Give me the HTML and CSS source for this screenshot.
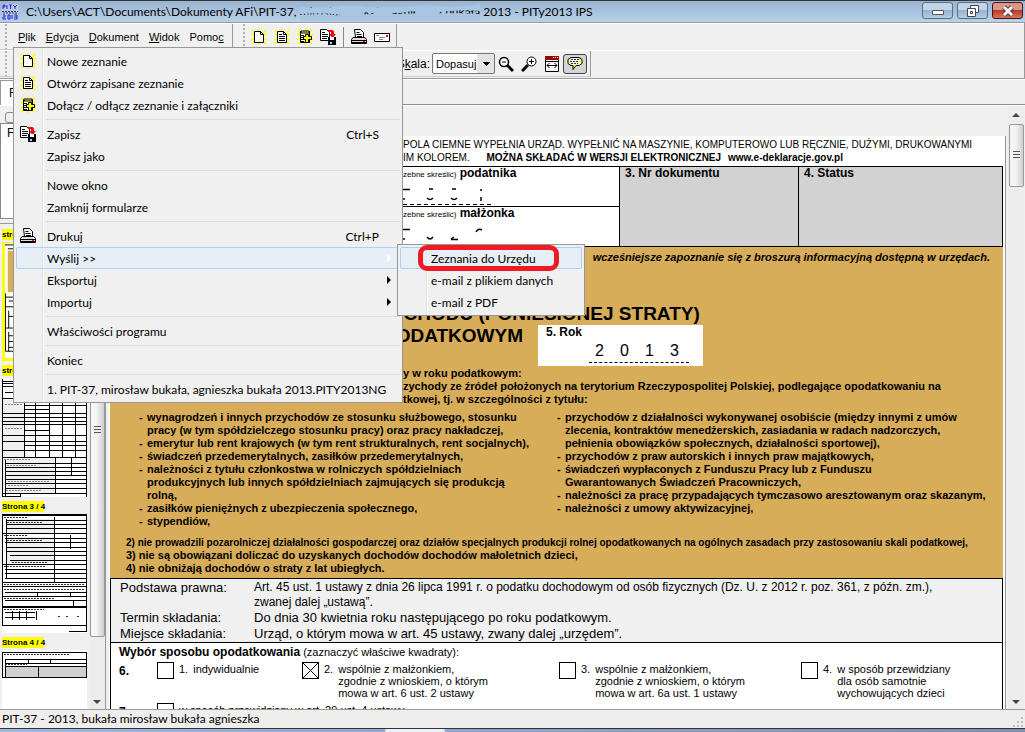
FILE: index.html
```html
<!DOCTYPE html>
<html lang="pl">
<head>
  <meta charset="UTF-8">
  <meta name="viewport" content="width=device-width, initial-scale=1.0">
  <title>PITy2013 IPS</title>
  <link rel="stylesheet" href="styles.css">
</head>
<body>

<!-- shared icons -->
<svg class="defs" aria-hidden="true">
  <symbol id="rays" viewBox="0 0 16 16">
    <path d="M1 1l14 14M15 1L1 15M8 0v16M0 5l16 6M0 11l16-6" stroke="#ff0" stroke-width="1.6"/>
  </symbol>
  <symbol id="new" viewBox="0 0 16 16">
    <use href="#rays"/>
    <path d="M3.5 2.5h6l3 3v8h-9z" fill="#fff" stroke="#000"/>
    <path d="M9.5 2.5v3h3" fill="none" stroke="#000"/>
  </symbol>
  <symbol id="open" viewBox="0 0 16 16">
    <use href="#rays"/>
    <path d="M3.5 2.5h6l3 3v8h-9z" fill="#fff" stroke="#000"/>
    <path d="M9.5 2.5v3h3M5 5.5h3M5 7.5h6M5 9.5h6M5 11.5h6" fill="none" stroke="#000"/>
  </symbol>
  <symbol id="attach" viewBox="0 0 16 16">
    <use href="#rays"/>
    <path d="M3.5 2.5h9v11h-9z" fill="#fff" stroke="#000"/>
    <path d="M4 2h8v2H4z" stroke="#000" fill="#ff0"/>
    <path d="M4 6.5h3M4 8.5h2M4 10.5h3M4 12.5h3" stroke="#000"/>
    <path d="M8.5 5.5h3v2h3v3h-3v3h-3v-3h-2v-3h2z" fill="#ff0" stroke="#000"/>
  </symbol>
  <symbol id="save" viewBox="0 0 16 16">
    <path d="M.5 .5h6l3 3v8h-9z" fill="#fff" stroke="#000"/>
    <path d="M2 3.5h3M2 5.5h6M2 7.5h6M2 9.5h5" stroke="#000"/>
    <path d="M8 1h4q2 0 2 2v2h2l-3.5 4L9 5h2V3H8z" fill="#f00"/>
    <path d="M8 8h8v8H8z"/>
    <path d="M10 8h4v3h-4z" fill="#fff"/>
    <path d="M10 13h2v2h-2z" fill="#ccc"/>
    <path d="M9 9v6" stroke="#00f" stroke-width=".6"/>
  </symbol>
  <symbol id="print" viewBox="0 0 16 16">
    <path d="M4.5 8.5l-1-8h6l3 3v5z" fill="#fff" stroke="#000"/>
    <path d="M5.5 3.5h3M5.5 5.5h5M6 7.5h5" stroke="#000"/>
    <path d="M2 8.5h12l1.5 2v4H.5v-4z" fill="#ddd" stroke="#000"/>
    <path d="M0 11.5h16M1 13.5h14" stroke="#000"/>
    <path d="M12 12.5h2" stroke="#f00"/>
  </symbol>
  <symbol id="mail" viewBox="0 0 16 16">
    <path d="M.5 4.5h15v8H.5z" fill="#fff" stroke="#000"/>
    <path d="M2 6.5h3M5 8.5h6M5 10.5h4" stroke="#888"/>
    <path d="M12 6h2v2h-2z" fill="#f00"/>
  </symbol>
  <symbol id="zoom-out" viewBox="0 0 16 16">
    <circle cx="6" cy="6" r="4.5" fill="#fff" stroke="#000" stroke-width="1.5"/>
    <path d="M4 6h4" stroke="#000"/>
    <path d="M9 9l6 6" stroke="#000" stroke-width="3"/>
  </symbol>
  <symbol id="zoom-in" viewBox="0 0 16 16">
    <circle cx="10.5" cy="5.5" r="4.5" fill="#fff" stroke="#000"/>
    <path d="M8 5.5h5M10.5 3v5" stroke="#000"/>
    <path d="M7 9l-6 6" stroke="#000" stroke-width="3"/>
  </symbol>
  <symbol id="fit" viewBox="0 0 16 16">
    <path d="M1.5 .5h13v15h-13z" fill="#fff" stroke="#000"/>
    <path d="M1 0h14v4H1z" fill="#900"/>
    <path d="M9 1.5h1M11 1.5h1M13 1.5h1" stroke="#fff"/>
    <path d="M3 9.5h10M5.5 7L3 9.5 5.5 12M10.5 7L13 9.5 10.5 12M1 5.5h14" fill="none" stroke="#000"/>
  </symbol>
  <symbol id="bubble" viewBox="0 0 16 16">
    <path d="M4 1.5h8l3 2v4l-3 2H9l-3 4v-4H4l-3-2v-4z" fill="#ff8" stroke="#000"/>
    <path d="M4 3.5h8M3 5.5h9M4 7.5h7" stroke="#22f" stroke-dasharray="2 1"/>
  </symbol>
</svg>

<header class="titlebar">
  <svg class="app-icon" viewBox="0 0 16 16" aria-hidden="true">
    <path d="M0 0h16v16H0z" fill="#b8c8f0"/>
    <path d="M1 5V1h2v2H1M5 1v4M7 1h3M8.5 1v4M11 1l2 2 2-2M13 3v2M1 11h2v2H1v2h3M6 11h2v4H6zM10 11v4M12 11h3v4h-3M12 13h3" fill="none" stroke="#22c"/>
    <path d="M0 7.5h16M1 9h14" stroke="#335" stroke-dasharray="2 1"/>
  </svg>
  <h1 class="title">C:\Users\ACT\Documents\Dokumenty AFi\PIT-37, <span class="smudged">mirosław bukała, agnieszka bukała<svg class="smudge" viewBox="0 0 182 18" preserveAspectRatio="none" aria-hidden="true"><path d="M0 4q20 2 46-1 50 3 80-1 30 4 56-1v7q-20-2-42 1-20-3-40 1-30-3-54 2-24-3-46-1zM0 12q24-2 44 1 30-3 60-2 30-2 78 0v7H0zM40 3h24v14H40zM74 6h18v9H74zM116 4h24v12h-24z" fill="#a8c5e2"/></svg></span> 2013 - PITy2013 IPS</h1>
  <div class="window-buttons">
    <button class="win" aria-label="Minimalizuj"><svg width="14" height="10" viewBox="0 0 14 10"><path d="M1.5 4.5h11v4h-11z" fill="#fff" stroke="#555"/></svg></button>
    <button class="win" aria-label="Przywróć"><svg width="14" height="12" viewBox="0 0 14 12"><path d="M4.5 .5h8v7h-8z" fill="#fff" stroke="#445"/><path d="M1.5 3.5h8v8h-8z" fill="#fff" stroke="#445"/><path d="M4.5 6.5h2v2h-2z" fill="none" stroke="#445"/></svg></button>
    <button class="win close" aria-label="Zamknij"><svg width="14" height="12" viewBox="0 0 14 12"><path d="M3 2l8 8M11 2L3 10" stroke="#533" stroke-width="5"/><path d="M3 2l8 8M11 2l-8 8" stroke="#fff" stroke-width="3"/></svg></button>
  </div>
</header>

<div class="rebar">
  <div class="band-row">
    <nav class="band menubar">
      <button><u>P</u>lik</button>
      <button><u>E</u>dycja</button>
      <button><u>D</u>okument</button>
      <button><u>W</u>idok</button>
      <button>Pomo<u>c</u></button>
    </nav>
    <div class="band icons">
      <button aria-label="Nowe zeznanie"><svg class="icon"><use href="#new"/></svg></button>
      <button aria-label="Otwórz"><svg class="icon"><use href="#open"/></svg></button>
      <button aria-label="Dołącz"><svg class="icon"><use href="#attach"/></svg></button>
      <button aria-label="Zapisz"><svg class="icon"><use href="#save"/></svg></button>
      <span class="vsep"></span>
      <button aria-label="Drukuj"><svg class="icon"><use href="#print"/></svg></button>
      <button aria-label="Wyślij"><svg class="icon"><use href="#mail"/></svg></button>
    </div>
  </div>
  <div class="band-row">
    <div class="band zoombar">
      <label for="scale">S<u>k</u>ala:</label>
      <select id="scale"><option>Dopasuj</option></select>
      <button aria-label="Pomniejsz"><svg class="icon"><use href="#zoom-out"/></svg></button>
      <button aria-label="Powiększ"><svg class="icon"><use href="#zoom-in"/></svg></button>
      <button aria-label="Szerokość strony"><svg class="icon"><use href="#fit"/></svg></button>
      <button class="pressed" aria-label="Podpowiedzi"><svg class="icon"><use href="#bubble"/></svg></button>
    </div>
  </div>
</div>

<div class="tabstrip"><span class="tab">F</span></div>

<main class="workspace">
  <aside class="sidebar">
    <div class="side-tools"><button aria-label="Zwiń"></button></div>
    <div class="tree">F</div>
    <div class="pages">
      <div class="thumbs">
        <div class="thumb current">
          <span>strona 1 / 4</span>
          <svg viewBox="0 0 85 119" preserveAspectRatio="none">
            <path d="M0 0h85v119H0z" fill="#fff"/>
            <path d="M3 8h79v43H3z" fill="#d8ad5a"/>
            <path d="M0 2h85M3 6h80M0 56h85M4 60h80M0 66h85M4 70v18M4 76h80M0 88h85M4 92v20M4 96h80M4 102h80M4 108h80M.5 52v60h84" fill="none" stroke="#000"/>
          </svg>
        </div>
        <div class="thumb">
          <span>strona 2 / 4</span>
          <svg viewBox="0 0 85 119">
            <path d="M0 0h85v119H0z" fill="#fff"/>
            <path d="M1 22h22v57H1zM1 80h52v36H1z" fill="#f0f0f0"/>
            <path d="M.5 1v118M84.5 1v118M22.5 22v57M33.5 22v57M47.5 22v57M60.5 22v57M73.5 22v57M53.5 80v36M69.5 80v17M3.5 82v36M18.5 116v3" stroke="#000"/>
            <path d="M0 3.5h85M0 5.5h85M0 8.5h85M3 14.5h82M0 20.5h85M22 27.5h62M22 31.5h25M0 35.5h85M0 39.5h85M0 43.5h85M0 46.5h85M22 52.5h25M0 57.5h85M0 63.5h85M22 67.5h62M0 72.5h85M0 79.5h85M3 85.5h82M3 89.5h82M3 93.5h82M3 97.5h82M3 101.5h82M3 105.5h82M3 110.5h82M0 115.5h85M0 118.5h18" stroke="#000"/>
            <path d="M3 26.5h18M3 50.5h18M2 81.5h26M5 87.5h30M6 103.5h42M6 107.5h20M4 112.5h35" stroke="#888" stroke-dasharray="2 1"/>
          </svg>
        </div>
        <div class="thumb">
          <span>Strona 3 / 4</span>
          <svg viewBox="0 0 85 119">
            <path d="M0 0h85v119H0z" fill="#fff"/>
            <path d="M4 5h48v15H4zM4 23h48v26H4z" fill="#f0f0f0"/>
            <path d="M0 .5h85M0 1.5h85M4 6.5h80M4 10.5h80M4 14.5h80M0 19.5h85M3 24.5h82M3 28.5h82M4 33.5h80M4 37.5h80M8 41.5h76M8 46.5h76M0 50.5h85M3 55.5h82M3 59.5h82M3 64.5h82M0 68.5h85M0 72.5h85M3 78.5h82M0 82.5h85M3 86.5h82M0 92.5h85M0 93.5h85M3 98.5h30M3 103.5h30M0 111.5h85M67 117.5h18" stroke="#000"/>
            <path d="M.5 1v110M84.5 1v117M4.5 5v60M52.5 3v66M68.5 21v14M35.5 78v4M68.5 78v4M71.5 86v6M10.5 97v9M17.5 97v9M24.5 97v9M34.5 97v9" stroke="#000"/>
            <path d="M2 3.5h24M5 8.5h36M2 21.5h24M5 26.5h36M10 48.5h36M2 52.5h42M2 70.5h80M2 75.5h80M2 84.5h50M2 95.5h40M56 102.5h2M64 102.5h2M75 102.5h2" stroke="#333" stroke-dasharray="2 1"/>
          </svg>
        </div>
        <div class="thumb">
          <span>Strona 4 / 4</span>
          <svg viewBox="0 0 85 119">
            <path d="M0 0h85v119H0z" fill="#fff"/>
            <path d="M3 16h82v11H3z" fill="#d0d0d0"/>
            <path d="M0 2.5h85M3 9.5h82M3 13.5h82M3 16.5h82M0 27.5h85M.5 2v25M84.5 2v25M3.5 9v18M36.5 16v11M26.5 9v4M48.5 9v4" stroke="#000"/>
            <path d="M2 4.5h66M3 14.5h22" stroke="#333" stroke-dasharray="2 1"/>
          </svg>
        </div>
      </div>
      <div class="scroll side-scroll">
        <div class="scroll-thumb"></div>
        <i class="arrow down"></i>
      </div>
    </div>
  </aside>

  <section class="viewer">
    <article class="sheet">
      <p class="notice">POLA CIEMNE WYPEŁNIA URZĄD. WYPEŁNIĆ NA MASZYNIE, KOMPUTEROWO LUB RĘCZNIE, DUŻYMI, DRUKOWANYMI<br>
        IM KOLOREM. <b class="gap">MOŻNA SKŁADAĆ W WERSJI ELEKTRONICZNEJ</b> <b>www.e-deklaracje.gov.pl</b></p>

      <div class="ids">
        <div class="persons">
          <div class="person"><small>zebne skreślić)</small> <b>podatnika</b>
            <svg class="digits" width="90" height="20" viewBox="0 0 90 20" aria-hidden="true">
              <path d="M0 4.5h7M26 4h4M49 4h4M78 4v2M1 13v2M24 13q3 3 6 0M48 13q3 3 6 0M78 12v4" fill="none" stroke="#000" stroke-width="1.5"/>
              <path d="M0 19.5h88" stroke="#000" stroke-dasharray="4 3"/>
            </svg>
          </div>
          <div class="person"><small>zebne skreślić)</small> <b>małżonka</b>
            <svg class="digits" width="90" height="20" viewBox="0 0 90 20" aria-hidden="true">
              <path d="M0 4.5h7M73 7q2-4 6-2M1 13v2M24 12q3 4 6 0M48 14l3-2M48 14.5h7" fill="none" stroke="#000" stroke-width="1.5"/>
            </svg>
          </div>
        </div>
        <div class="grey"><b>3. Nr dokumentu</b></div>
        <div class="grey"><b>4. Status</b></div>
      </div>

      <div class="gold">
        <p class="advice">wcześniejsze zapoznanie się z broszurą informacyjną dostępną w urzędach.</p>
        <h2 class="heading">DOCHODU (PONIESIONEJ STRATY)</h2>
        <div class="year-row">
          <h2 class="heading">PODATKOWYM</h2>
          <div class="year"><b>5. Rok</b><div class="year-digits"><span>2</span><span>0</span><span>1</span><span>3</span></div></div>
        </div>
        <div class="intro">
          <p>y w roku podatkowym:</p>
          <p>zychody ze źródeł położonych na terytorium Rzeczypospolitej Polskiej, podlegające opodatkowaniu na</p>
          <p>tkowej, tj. w szczególności z tytułu:</p>
        </div>
        <div class="sources">
          <ul>
            <li>wynagrodzeń i innych przychodów ze stosunku służbowego, stosunku<br>pracy (w tym spółdzielczego stosunku pracy) oraz pracy nakładczej,</li>
            <li>emerytur lub rent krajowych (w tym rent strukturalnych, rent socjalnych),</li>
            <li>świadczeń przedemerytalnych, zasiłków przedemerytalnych,</li>
            <li>należności z tytułu członkostwa w rolniczych spółdzielniach<br>produkcyjnych lub innych spółdzielniach zajmujących się produkcją<br>rolną,</li>
            <li>zasiłków pieniężnych z ubezpieczenia społecznego,</li>
            <li>stypendiów,</li>
          </ul>
          <ul>
            <li>przychodów z działalności wykonywanej osobiście (między innymi z umów<br>zlecenia, kontraktów menedżerskich, zasiadania w radach nadzorczych,<br>pełnienia obowiązków społecznych, działalności sportowej),</li>
            <li>przychodów z praw autorskich i innych praw majątkowych,</li>
            <li>świadczeń wypłaconych z Funduszu Pracy lub z Funduszu<br>Gwarantowanych Świadczeń Pracowniczych,</li>
            <li>należności za pracę przypadających tymczasowo aresztowanym oraz skazanym,</li>
            <li>należności z umowy aktywizacyjnej,</li>
          </ul>
        </div>
        <div class="conditions">
          <p class="tight">2) nie prowadzili pozarolniczej działalności gospodarczej oraz działów specjalnych produkcji rolnej opodatkowanych na ogólnych zasadach przy zastosowaniu skali podatkowej,</p>
          <p>3) nie są obowiązani doliczać do uzyskanych dochodów dochodów małoletnich dzieci,</p>
          <p>4) nie obniżają dochodów o straty z lat ubiegłych.</p>
        </div>
      </div>

      <dl class="legal">
        <dt>Podstawa prawna:</dt>
        <dd class="act">Art. 45 ust. 1 ustawy z dnia 26 lipca 1991 r. o podatku dochodowym od osób fizycznych (Dz. U. z 2012 r. poz. 361, z późn. zm.),<br>zwanej dalej „ustawą”.</dd>
        <dt>Termin składania:</dt>
        <dd>Do dnia 30 kwietnia roku następującego po roku podatkowym.</dd>
        <dt>Miejsce składania:</dt>
        <dd>Urząd, o którym mowa w art. 45 ustawy, zwany dalej „urzędem”.</dd>
      </dl>

      <div class="choice">
        <p class="choice-title"><b>Wybór sposobu opodatkowania</b> (zaznaczyć właściwe kwadraty):</p>
        <div class="options">
          <b class="num">6.</b>
          <label><input type="checkbox"><span>1.</span><span>indywidualnie</span></label>
          <label><input type="checkbox" checked><span>2.</span><span>wspólnie z małżonkiem,<br>zgodnie z wnioskiem, o którym<br>mowa w art. 6 ust. 2 ustawy</span></label>
          <label><input type="checkbox"><span>3.</span><span>wspólnie z małżonkiem,<br>zgodnie z wnioskiem, o którym<br>mowa w art. 6a ust. 1 ustawy</span></label>
          <label><input type="checkbox"><span>4.</span><span>w sposób przewidziany<br>dla osób samotnie<br>wychowujących dzieci</span></label>
        </div>
        <div class="options">
          <b class="num">7.</b>
          <label class="wide"><input type="checkbox"><span>w sposób przewidziany w art. 29 ust. 4 ustawy</span></label>
        </div>
      </div>
    </article>
  </section>

  <div class="scroll main-scroll">
    <i class="arrow up"></i>
    <div class="scroll-thumb"></div>
    <i class="arrow down"></i>
  </div>
</main>

<footer class="statusbar"><span>PIT-37 - 2013, bukała mirosław bukała agnieszka</span>
  <svg width="10" height="10" viewBox="0 0 10 10" aria-hidden="true"><path d="M8 0h2v2H8zM4 4h2v2H4zM8 4h2v2H8zM0 8h2v2H0zM4 8h2v2H4zM8 8h2v2H8z" fill="#bbb"/></svg>
</footer>
<div class="taskbar"><i></i></div>

<ul class="menu file-menu">
  <li><button><svg class="icon"><use href="#new"/></svg>Nowe zeznanie</button></li>
  <li><button><svg class="icon"><use href="#open"/></svg>Otwórz zapisane zeznanie</button></li>
  <li><button><svg class="icon"><use href="#attach"/></svg>Dołącz / odłącz zeznanie i załączniki</button></li>
  <li class="sep"></li>
  <li><button><svg class="icon"><use href="#save"/></svg>Zapisz<kbd>Ctrl+S</kbd></button></li>
  <li><button>Zapisz jako</button></li>
  <li class="sep"></li>
  <li><button>Nowe okno</button></li>
  <li><button>Zamknij formularze</button></li>
  <li class="sep"></li>
  <li><button><svg class="icon"><use href="#print"/></svg>Drukuj<kbd>Ctrl+P</kbd></button></li>
  <li><button class="more hover">Wyślij &gt;&gt;</button></li>
  <li><button class="more">Eksportuj</button></li>
  <li><button class="more">Importuj</button></li>
  <li class="sep"></li>
  <li><button>Właściwości programu</button></li>
  <li class="sep"></li>
  <li><button>Koniec</button></li>
  <li class="sep"></li>
  <li><button>1. PIT-37, mirosław bukała, agnieszka bukała 2013.PITY2013NG</button></li>
</ul>

<ul class="menu sub-menu">
  <li><button class="hover">Zeznania do Urzędu</button></li>
  <li><button>e-mail z plikiem danych</button></li>
  <li><button>e-mail z PDF</button></li>
</ul>
<div class="marker"></div>

</body>
</html>
```

FILE: styles.css
```css
* { margin:0; padding:0; box-sizing:border-box; }

body { display:flex; flex-direction:column; height:100vh; overflow:hidden; background:#f0f0f0; color:#000; font:12px Lato, sans-serif; }
button { border:0; background:none; color:inherit; font:inherit; }
ul { list-style:none; }
.defs { position:absolute; width:0; height:0; }
.icon { display:block; width:16px; height:16px; flex:none; }

/* title bar */
.titlebar { display:flex; align-items:center; height:23px; padding:0 2px; border-top:1px solid #333; border-bottom:1px solid #999; background:linear-gradient(#99b4d1, #b9d1ea); }
.app-icon { width:16px; height:16px; margin-right:8px; }
.title { flex:1; font-size:12px; font-weight:normal; line-height:18px; white-space:pre; }
.smudged { position:relative; display:inline-block; }
.smudge { position:absolute; left:0; top:0; width:100%; height:18px; }
.window-buttons { display:flex; gap:4px; align-self:flex-start; padding-top:1px; }
.win { display:flex; align-items:center; justify-content:center; width:31px; height:17px; border:1px solid #56708c; border-radius:3px; background:linear-gradient(#c3d4e7 50%, #98b3d0 50%, #b5cce4); }
.close { border-color:#4d1118; background:linear-gradient(#d9978a 45%, #b83a25 50%, #d5765c); }

/* toolbars */
.rebar { height:56px; border-right:1px solid #999; border-bottom:1px solid #999; font:11px "Liberation Sans", sans-serif; }
.band-row { display:flex; gap:5px; height:27px; border-top:1px solid #fff; }
.band { display:flex; align-items:center; padding-left:16px; border-right:1px solid #999; border-bottom:1px solid #ccc; background:radial-gradient(circle, #b0b0b0 1px, transparent 1px) 4px 3px / 4px 4px repeat-y; }
.menubar { gap:10px; width:233px; padding-left:18px; }
.menubar button { flex:none; }
.icons { gap:7px; padding-left:13px; }
.icons button:last-child { margin-right:6px; }
.vsep { width:1px; height:20px; background:#888; }
.zoombar { gap:7px; width:591px; padding-right:3px; justify-content:flex-end; }
.zoombar label { margin-right:-5px; font-size:12px; }
#scale { width:63px; height:21px; margin-right:-4px; padding-left:3px; border:1px solid #777; border-radius:2px; appearance:none; color:#000; font:11px "Liberation Sans", sans-serif;
  background:linear-gradient(#000, #000) 50px 8px / 7px 1px no-repeat, linear-gradient(#000, #000) 51px 9px / 5px 1px no-repeat, linear-gradient(#000, #000) 52px 10px / 3px 1px no-repeat, linear-gradient(#000, #000) 53px 11px / 1px 1px no-repeat, linear-gradient(90deg, #fff 44px, #e4e4e4 44px); }
.pressed { padding:1px 3px; border:1px solid #444; border-radius:3px; background:#d4d4d4; }
.zoombar .pressed { margin-left:-4px; }

.tabstrip { height:26px; border-top:1px solid #fff; border-bottom:1px solid #888d96; }
.tab { display:block; width:60px; height:25px; padding:5px 8px; border:1px solid #999; border-bottom:0; background:#fff; font:12px/14px "Liberation Sans", sans-serif; }

/* sidebar */
.workspace { display:flex; flex:1; min-height:0; border-top:1px solid #fff; }
.sidebar { display:flex; flex-direction:column; width:106px; border-right:1px solid #999; }
.side-tools { height:17px; padding:4px 5px; }
.side-tools button { width:20px; height:11px; border:1px solid #888; border-radius:3px; }
.tree { height:96px; padding:2px 6px; border:1px solid #888; background:#fff; font:12px/14px "Liberation Sans", sans-serif; }
.pages { display:flex; flex:1; min-height:0; margin-top:4px; border-top:1px solid #999; }
.thumbs { width:87px; padding:5px 0 0 2px; overflow:hidden; }
.thumb { height:136px; }
.thumb span { display:block; width:42px; height:11px; margin-bottom:2px; background:#ff0; font:bold 8px/11px "Liberation Sans", sans-serif; white-space:nowrap; }
.thumb svg { display:block; width:85px; height:119px; }
.current svg { border:3px solid #ff0; border-top-width:1px; }

/* scrollbars */
.scroll { display:flex; flex-direction:column; align-items:center; width:16px; background:#ececec; }
.scroll-thumb { width:15px; border:1px solid #999; border-radius:2px;
  background:repeating-linear-gradient(#555 0 1px, #eee 1px 3px) center / 7px 9px no-repeat, linear-gradient(90deg, #f5f5f5 40%, #cfcfd2); }
.side-scroll { justify-content:space-between; margin-left:2px; padding-bottom:5px; }
.side-scroll .scroll-thumb { height:413px; }
.main-scroll { padding:7px 0 5px; margin-right:1px; }
.main-scroll .scroll-thumb { height:63px; margin-top:7px; }
.main-scroll .down { margin-top:auto; }
.arrow { border:4px solid transparent; }
.up { border-top:0; border-bottom-color:#444; }
.down { border-bottom:0; border-top-color:#444; }

/* form sheet */
.viewer { flex:1; min-width:0; padding:30px 2px 0 3px; overflow:hidden; }
.sheet { height:900px; padding:2px 2px 0 1px; border-right:1px solid #999; background:#fff; font:bold 11px/13px "Liberation Sans", sans-serif; white-space:nowrap; }
.notice { height:28px; padding-left:293px; font-size:10px; font-weight:normal; line-height:13px; }
.notice b { font-size:10px; margin-right:4px; }
.notice .gap { margin-left:14px; }
.ids { display:grid; grid-template-columns:509px 179px 1fr; height:81px; border:1px solid #000; border-left:0; font-size:12px; }
.persons { display:grid; grid-template-rows:1fr 1fr; }
.person { padding-left:293px; border-bottom:1px solid #000; }
.person:last-child { border-bottom:0; }
.person small { font-size:8px; font-weight:normal; }
.digits { display:block; height:20px; margin-top:4px; }
.grey { padding-left:5px; border-left:1px solid #000; background:#d2d2d2; }

.gold { height:331px; padding:4px 13px 0 16px; background:#d8ad5a; }
.advice { height:52px; font-style:italic; text-align:right; }
.heading { padding-left:249px; font-size:19px; line-height:22px; }
.year-row { display:flex; align-items:flex-start; height:41px; margin-bottom:1px; }
.year-row .heading { width:397px; padding:0; text-align:right; }
.year { width:165px; height:41px; margin-left:15px; padding-left:8px; background:#fff; font-size:12px; line-height:14px; }
.year-digits { display:flex; width:100px; margin-left:43px; border-bottom:1px dashed #000; font:16px/23px "Liberation Sans", sans-serif; }
.year-digits span { flex:1; padding-left:6px; }
.intro { height:44px; padding-left:277px; }
.sources { display:grid; grid-template-columns:418px 1fr; height:125px; padding-left:13px; }
.sources li { display:flex; }
.sources li::before { content:"-"; flex:none; width:8px; }
.tight { font-size:10px; }
.legal { display:grid; grid-template-columns:134px 1fr; height:65px; padding:1px 9px; border:1px solid #000; background:#f0f0f0; font-size:13px; font-weight:normal; line-height:15px; }
.act { font-size:12px; }
.choice { height:300px; padding:2px 8px; border:1px solid #000; border-top:0; font-weight:normal; }
.choice-title { height:16px; line-height:14px; }
.choice-title b { font-size:12px; }
.options { display:grid; grid-template-columns:38px 145px 257px 242px 1fr; height:41px; line-height:12px; }
.num { padding-top:4px; font-size:12px; }
.options label { display:flex; gap:5px; padding-top:2px; }
.options input { flex:none; width:17px; height:17px; margin-top:-1px; border:1px solid #000; appearance:none; background:#fff; }
.options input:checked { background:linear-gradient(45deg, transparent 48%, #000 48% 52%, transparent 52%), linear-gradient(-45deg, transparent 48%, #000 48% 52%, transparent 52%); }
.options .wide { grid-column:2 / -1; }

.statusbar { display:flex; justify-content:space-between; align-items:flex-end; height:19px; padding:0 2px 1px; border-top:1px solid #999; background:#f0eded; line-height:17px; }
.taskbar { height:4px; padding-left:385px; border-top:1px solid #333; background:linear-gradient(90deg, #9bbbe0, #7f8fb0); }
.taskbar i { display:block; width:60px; height:3px; border-radius:2px; background:#e8f0f8; }

/* open menus */
.menu { position:absolute; border:1px solid #979797; background:linear-gradient(90deg, #e2e3e3 1px, #fff 1px 2px, transparent 2px) 28px 0 no-repeat, #f0f0f0; white-space:nowrap; }
.menu button { display:flex; align-items:center; position:relative; width:100%; height:22px; padding:0 20px 0 30px; border:1px solid transparent; border-radius:2px; text-align:left; }
.menu .icon { position:absolute; left:3px; top:2px; }
.menu kbd { margin-left:auto; font:inherit; }
.menu .hover { border-color:#aecff7; background:rgba(220, 235, 252, .45); }
.sep { height:7px; margin-left:30px; border-top:3px solid #f0f0f0; border-bottom:3px solid #f0f0f0; background:#dcdcdc; }
.more::after { content:""; margin-left:auto; margin-right:-12px; border:4px solid transparent; border-left-color:#000; border-right:0; }
.more.hover::after { border-left-color:#fff; }
.file-menu { left:13px; top:47px; width:390px; padding:2px; }
.sub-menu { left:397px; top:244px; width:188px; padding:2px; }
.marker { position:absolute; left:418px; top:245px; width:141px; height:26px; border:5px solid #ed1c24; border-radius:9px; pointer-events:none; }
```
